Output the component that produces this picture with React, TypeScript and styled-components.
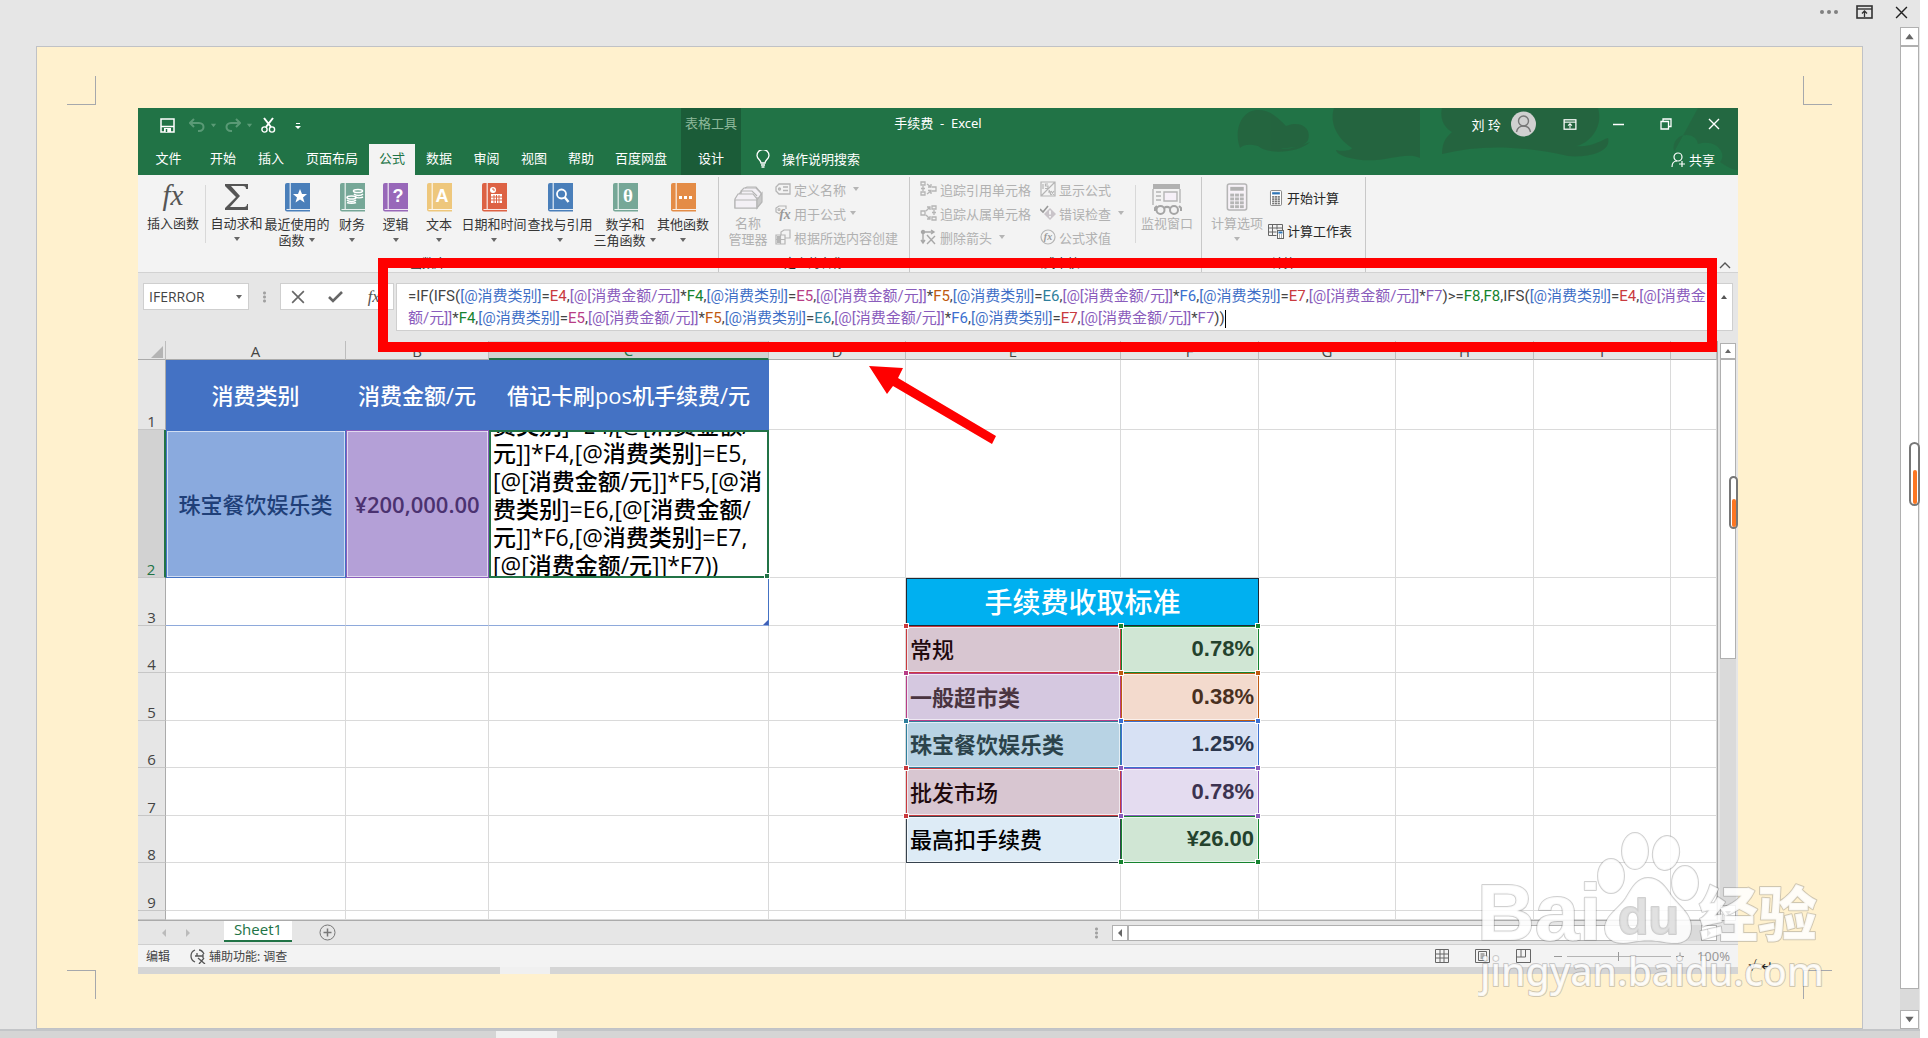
import React from 'react';
import styled, { createGlobalStyle, css } from 'styled-components';

const UI = `"Noto Sans", "Noto Sans CJK SC", sans-serif`;
const SHEET = `"Open Sans", "Noto Sans CJK SC", sans-serif`;

const GlobalStyle = createGlobalStyle`
  *, *::before, *::after { box-sizing: border-box; }
  body { margin: 0; background: #fff; font-family: ${UI}; font-size: 13px; color: #262626; }
  button, input { font: inherit; color: inherit; margin: 0; padding: 0; border: 0; background: none; }
  svg { display: block; flex: none; }
`;

/* ---------- outer document frame ---------- */

const Desk = styled.div`
  display: flex;
  flex-direction: column;
  min-height: 100vh;
  margin-right: 8px;
  background: #e6e6e6;
`;
const DeskBody = styled.div`
  position: relative;
  flex: 1;
  display: grid;
  grid-template-columns: minmax(0, 1fr) 20px;
  grid-template-rows: 27px 1fr;
`;
const DeskControls = styled.div`
  grid-column: 1 / 3;
  display: flex;
  justify-content: flex-end;
  align-items: center;
  gap: 18px;
  padding: 0 12px 3px 0;
`;
const IconButton = styled.button<{ $ml?: number; $mr?: number; $mt?: number }>`
  display: flex;
  align-items: center;
  justify-content: center;
  margin: ${p => p.$mt || 0}px ${p => p.$mr || 0}px 0 ${p => p.$ml || 0}px;
`;
const Paper = styled.main`
  position: relative;
  margin: 19px 37px 0 36px;
  padding: 61px 0 54px 101px;
  border: 1px solid #c0c2c6;
  background: #fff1ce;
  display: flex;
  align-items: flex-end;
`;
const CropMark = styled.i<{ $v: 'top' | 'bottom'; $h: 'left' | 'right' }>`
  position: absolute;
  width: 29px;
  height: 29px;
  ${p => p.$v}: 29px;
  ${p => p.$h}: 30px;
  border: 0 solid #a6a8ac;
  border-${p => (p.$v === 'top' ? 'bottom' : 'top')}-width: 1px;
  border-${p => (p.$h === 'left' ? 'right' : 'left')}-width: 1px;
`;
const Mark = styled.span`
  padding: 0 0 0 10px;
  width: 124px;
  flex: none;
  font: italic 14px/16px "DejaVu Sans", sans-serif;
  color: #222;
`;
const DeskFooter = styled.div`
  height: 10px;
  border-top: 2px solid #c3c5c8;
  background: #d5d5d5;
  padding-left: 496px;
`;
const FooterThumb = styled.i<{ $w: number }>`
  display: block;
  width: ${p => p.$w}px;
  height: 100%;
  background: #f0f0f0;
`;

/* ---------- scroll bars ---------- */

const VBar = styled.div`
  display: flex;
  flex-direction: column;
  background: #dadada;
  width: 19px;
`;
const SheetVBar = styled(VBar)`
  width: 16px;
  margin-top: 2px;
`;
const BarButton = styled.button<{ $s: number }>`
  width: ${p => p.$s}px;
  height: ${p => p.$s}px;
  flex: none;
  border: 1px solid #b0b0b0;
  background: #fff;
  display: flex;
  align-items: center;
  justify-content: center;
`;
const VThumb = styled.div<{ $w: number; $grow: number }>`
  width: ${p => p.$w}px;
  flex: ${p => p.$grow} 1 0;
  border: 1px solid #b0b0b0;
  background: #fff;
`;
const Space = styled.div<{ $grow: number }>`
  flex: ${p => p.$grow} 1 0;
`;
const Gauge = styled.i<{ $top: number; $w: number; $h: number; $fill: number }>`
  position: absolute;
  right: 0;
  top: ${p => p.$top}px;
  width: ${p => p.$w}px;
  height: ${p => p.$h}px;
  border: 2px solid #777;
  border-radius: 6px;
  background: #fff;
  display: flex;
  align-items: flex-end;
  justify-content: center;
  &::after {
    content: '';
    width: 4px;
    height: ${p => p.$fill}px;
    border-radius: 2px;
    background: #fc7622;
  }
`;

/* ---------- spreadsheet window ---------- */

const Window = styled.section`
  position: relative;
  flex: 1;
  min-width: 0;
  display: flex;
  flex-direction: column;
  background: #e6e6e6;
`;
const Header = styled.header`
  position: relative;
  background: #217346;
  color: #fff;
`;
const HeaderArt = styled.svg`
  position: absolute;
  right: 0;
  top: 0;
`;
const TitleRow = styled.div`
  position: relative;
  display: grid;
  grid-template-columns: 543px 60px 1fr 603px;
  height: 36px;
`;
const QuickAccess = styled.div`
  display: flex;
  align-items: center;
  padding: 0 0 2px 22px;
`;
const ContextTitle = styled.span`
  background: #1b5c38;
  color: #8db99b;
  text-align: center;
  line-height: 30px;
`;
const Title = styled.div`
  text-align: center;
  line-height: 30px;
  white-space: pre;
`;
const WindowControls = styled.div`
  display: flex;
  justify-content: flex-end;
  height: 32px;
  align-items: center;
`;
const User = styled.span`
  margin-right: 10px;
`;
const WinButton = styled(IconButton)`
  width: 48px;
  height: 32px;
`;
const Avatar = styled.span`
  margin-right: 10px;
`;
const TabRow = styled.nav`
  position: relative;
  display: flex;
  height: 31px;
`;
const Tab = styled.button<{ $w: number; $on?: boolean; $ctx?: boolean }>`
  width: ${p => p.$w}px;
  height: 31px;
  white-space: nowrap;
  line-height: 28px;
  padding-bottom: 3px;
  ${p => p.$on && css`background: #f3f3f3; color: #217346;`}
  ${p => p.$ctx && css`background: #1b5c38; margin-left: 3px;`}
`;
const Tell = styled.button`
  display: flex;
  align-items: center;
  gap: 12px;
  margin-left: 15px;
  padding-bottom: 2px;
`;
const Share = styled.button`
  display: flex;
  align-items: center;
  gap: 3px;
  margin-left: auto;
  margin-right: 23px;
`;

const Ribbon = styled.div`
  display: flex;
  height: 98px;
  padding-top: 2px;
  background: #f3f3f3;
  border-bottom: 1px solid #d2d2d2;
`;
const Group = styled.div<{ $w: number }>`
  width: ${p => p.$w}px;
  flex: none;
  display: flex;
  flex-direction: column;
  border-right: 1px solid #c8c8c8;
`;
const Commands = styled.div<{ $pad: number }>`
  display: flex;
  height: 80px;
  padding-left: ${p => p.$pad}px;
`;
const GroupName = styled.div`
  text-align: center;
  line-height: 14px;
  font-size: 12px;
`;
const Rule = styled.i<{ $wide?: boolean }>`
  width: 1px;
  height: 58px;
  margin: 8px ${p => (p.$wide ? 4 : 0)}px 0 4px;
  background: #d8d8d8;
`;
const Big = styled.button<{ $w: number; $off?: boolean; $tight?: boolean }>`
  width: ${p => p.$w}px;
  flex: none;
  display: flex;
  flex-direction: column;
  align-items: center;
  justify-content: flex-start;
  padding-top: 6px;
  line-height: 16px;
  white-space: nowrap;
  color: ${p => (p.$off ? '#b1b1b1' : '#363636')};
  & > svg:first-child { margin-bottom: ${p => (p.$tight ? 0 : 4)}px; }
`;
const Line = styled.span`
  display: flex;
  align-items: center;
  gap: 3px;
  height: 16px;
`;
const Stack = styled.div<{ $w: number; $row: number; $top: number }>`
  width: ${p => p.$w}px;
  flex: none;
  display: grid;
  grid-auto-rows: ${p => p.$row}px;
  padding-top: ${p => p.$top}px;
`;
const Small = styled.button<{ $off?: boolean }>`
  display: flex;
  align-items: center;
  gap: 3px;
  white-space: nowrap;
  color: ${p => (p.$off ? '#b1b1b1' : '#262626')};
`;
const Collapse = styled.button`
  margin: auto 7px 0 auto;
  height: 14px;
`;

const FormulaRow = styled.div`
  display: flex;
  align-items: flex-start;
  height: 68px;
  padding: 10px 5px 0;
`;
const Field = styled.div<{ $w: number; $pad?: number }>`
  width: ${p => p.$w}px;
  height: 27px;
  flex: none;
  display: flex;
  align-items: center;
  justify-content: space-between;
  padding: 0 ${p => p.$pad || 0}px;
  background: #fff;
  border: 1px solid #cfcfcf;
  color: #444;
`;
const NameInput = styled.input`
  width: 76px;
  padding-left: 5px;
  font-size: 14px;
  font-family: ${SHEET};
`;
const Dots = styled.i`
  width: 3px;
  height: 12px;
  margin: 8px 14px;
  flex: none;
  background: radial-gradient(circle, #a0a0a0 1px, transparent 2px) 0 0 / 3px 4px;
`;
const FormulaBox = styled.div`
  flex: 1;
  min-width: 0;
  height: 48px;
  margin-left: 2px;
  padding: 1px 4px 0 11px;
  background: #fff;
  border: 1px solid #cfcfcf;
  display: flex;
  justify-content: space-between;
  align-items: flex-start;
`;
const Formula = styled.div`
  min-width: 0;
  font: 15px/22px Roboto, "Noto Sans CJK SC", sans-serif;
  color: #444;
  white-space: nowrap;
`;
const FormulaLine = styled.div``;
const Tok = styled.span<{ $c: string }>`
  color: ${p => p.$c};
`;
const Caret = styled.i`
  display: inline-block;
  width: 1px;
  height: 18px;
  vertical-align: middle;
  background: #000;
`;

const SheetArea = styled.div`
  display: grid;
  grid-template-columns: minmax(0, 1fr) 18px;
  column-gap: 3px;
`;
const Grid = styled.table`
  width: 100%;
  table-layout: fixed;
  border-collapse: separate;
  border-spacing: 0;
  border-right: 1px solid #ababab;
  border-bottom: 1px solid #ababab;
  background: #fff;
  font: 500 22px/28px ${SHEET};
`;
const Col = styled.col<{ $w: number }>`
  width: ${p => p.$w}px;
`;
const ColHead = styled.th<{ $on?: boolean }>`
  height: 19px;
  padding: 1px 0 0;
  font: 400 15px/16px ${SHEET};
  color: ${p => (p.$on ? '#217346' : '#444')};
  background: ${p => (p.$on ? '#d2d2d2' : '#e6e6e6')};
  border-right: 1px solid #bdbdbd;
  border-bottom: ${p => (p.$on ? '2px solid #217346' : '1px solid #ababab')};
`;
const Corner = styled.th`
  padding: 0;
  background: #e6e6e6;
  border-right: 1px solid #bdbdbd;
  border-bottom: 1px solid #ababab;
  svg { margin: 3px 0 0 13px; }
`;
const RowHead = styled.th<{ $on?: boolean; $h: number }>`
  height: ${p => p.$h}px;
  padding: 0;
  vertical-align: bottom;
  font: 400 15px/16px ${SHEET};
  color: ${p => (p.$on ? '#217346' : '#444')};
  background: ${p => (p.$on ? '#d2d2d2' : '#e6e6e6')};
  border-right: ${p => (p.$on ? '2px solid #217346' : '1px solid #ababab')};
  border-bottom: 1px solid #c6c6c6;
`;
const Cell = styled.td<{ $bg?: string; $line?: string; $fg?: string; $align?: string; $weight?: number }>`
  position: relative;
  padding: 0 4px;
  white-space: nowrap;
  text-align: ${p => p.$align || 'left'};
  font-weight: ${p => p.$weight || 500};
  color: ${p => p.$fg || '#000'};
  background: ${p => p.$bg || '#fff'};
  border-right: 1px solid ${p => p.$line || '#dadada'};
  border-bottom: 1px solid ${p => p.$line || '#dadada'};
  ${p => p.$line && css`box-shadow: inset 1px 1px ${p.$line}, inset 2px 2px #ffffff99, inset -1px -1px #ffffff99;`}
`;
const HeadCell = styled(Cell)`
  border-color: #4472c4;
`;
const BandCell = styled(Cell)`
  border: 1px solid #1f2a36;
  font-size: 28px;
`;
const RateCell = styled(Cell)`
  font-family: "Liberation Sans", "Noto Sans CJK SC", sans-serif;
`;
const TableEnd = styled(Cell)<{ $last?: boolean }>`
  border-bottom: 1px solid #8ea9db;
  ${p => p.$last && css`border-right-color: #4472c4;`}
`;
const EndMark = styled.svg`
  position: absolute;
  right: 0;
  bottom: 0;
`;
const Edit = styled.div`
  height: 144px;
  overflow: hidden;
  display: flex;
  align-items: flex-end;
`;
const EditText = styled.div`
  margin-bottom: -3px;
  font-size: 23px;
  line-height: 28px;
  white-space: pre;
`;
const EditCell = styled(Cell)`
  padding: 0 2px;
  border: 2px solid #217346;
`;
const Handle = styled.i<{ $c: string; $at: 'tl' | 'tr' | 'bl' | 'br' }>`
  position: absolute;
  z-index: 1;
  width: 6px;
  height: 6px;
  background: ${p => p.$c};
  border: 1px solid #fff;
  ${p => (p.$at[0] === 't' ? 'top' : 'bottom')}: -3px;
  ${p => (p.$at[1] === 'l' ? 'left' : 'right')}: -3px;
`;

const SheetBar = styled.div`
  display: flex;
  height: 24px;
  align-items: center;
  border-bottom: 1px solid #cfcfcf;
`;
const SheetNav = styled.div`
  width: 86px;
  display: flex;
  gap: 16px;
  padding-left: 22px;
`;
const SheetTab = styled.button`
  width: 68px;
  height: 21px;
  align-self: flex-start;
  padding-bottom: 4px;
  background: #fff;
  color: #217346;
  font: 15px/16px ${SHEET};
  border-bottom: 2px solid #217346;
`;
const HBar = styled.div`
  display: flex;
  width: 605px;
  height: 16px;
  margin: 0 21px 0 0;
  background: #dadada;
`;
const HThumb = styled.div`
  width: 510px;
  background: #fff;
  border: 1px solid #b0b0b0;
`;
const Status = styled.footer`
  display: flex;
  align-items: center;
  height: 22px;
  padding: 0 8px;
  background: #f3f3f3;
  font-size: 12px;
  color: #444;
`;
const Access = styled.span`
  display: flex;
  align-items: center;
  gap: 2px;
  margin-left: 20px;
`;
const Views = styled.div`
  display: flex;
  gap: 26px;
  margin-left: auto;
`;
const Zoom = styled.label`
  display: flex;
  align-items: center;
  gap: 5px;
  margin-left: 23px;
  color: #999;
`;
const Range = styled.input`
  appearance: none;
  width: 104px;
  height: 9px;
  background: linear-gradient(#b5b5b5, #b5b5b5) 0 4px / 100% 1px no-repeat;
  &::-webkit-slider-thumb { appearance: none; width: 1px; height: 9px; background: #999; }
`;
const Percent = styled.span`
  margin-left: 8px;
  font-size: 13px;
`;
const BottomStrip = styled.div`
  height: 7px;
  background: #d5d5d5;
  padding-left: 362px;
`;

/* ---------- annotations lying over the window ---------- */

const RedFrame = styled.div`
  position: absolute;
  z-index: 2;
  left: 240px;
  right: 21px;
  top: 150px;
  height: 94px;
  border: 10px solid #f00;
  pointer-events: none;
`;
const Arrow = styled.svg`
  position: absolute;
  z-index: 2;
  left: 731px;
  top: 258px;
`;
const Watermark = styled.svg`
  position: absolute;
  z-index: 3;
  right: 34px;
  bottom: 27px;
`;

/* ---------- icons ---------- */

const Tri = ({ d = 'down', c = '#666', s = 8 }: { d?: 'down' | 'up' | 'left' | 'right'; c?: string; s?: number }) => {
  const path = { down: 'M1 2h6L4 6z', up: 'M1 6h6L4 2z', left: 'M6 0v8L2 4z', right: 'M2 0v8l4-4z' }[d];
  return <svg width={s} height={s} viewBox="0 0 8 8"><path d={path} fill={c} /></svg>;
};
const Cross = ({ c, s = 12, w = 2 }: { c: string; s?: number; w?: number }) => (
  <svg width={s} height={s} viewBox="0 0 12 12"><path d="M1 1l10 10M11 1L1 11" stroke={c} strokeWidth={w} fill="none" /></svg>
);
const Popup = ({ c, w = 17 }: { c: string; w?: number }) => (
  <svg width={w} height={w - 3} viewBox="0 0 17 14" fill="none" stroke={c}>
    <rect x="1" y="1" width="15" height="12" strokeWidth="1.6" /><path d="M1 4h15" strokeWidth="1.4" />
    <path d="M8.500 12V6M6 8.500L8.500 6 11 8.500" strokeWidth="1.300" />
  </svg>
);
const Book = ({ c, children }: { c: string; children: React.ReactNode }) => (
  <svg width="25" height="29" viewBox="0 0 25 29">
    <path d="M2 0h23v28.500H2a2 2 0 0 1-2-2V2a2 2 0 0 1 2-2z" fill={c} />
    <path d="M5.200 0v26M1.500 26.500H25" stroke="#fff" strokeWidth="1.200" opacity=".85" fill="none" />
    {children}
  </svg>
);
const Glyph = ({ x, children, f = 'Liberation Sans', s = 18 }: any) => (
  <text x={x} y="19" textAnchor="middle" fontFamily={f} fontWeight="700" fontSize={s} fill="#fff">{children}</text>
);
const Fx = ({ s = 28, c = '#555', dim = 31 }: { s?: number; c?: string; dim?: number }) => (
  <svg width={dim} height={s} viewBox="0 0 31 28">
    <text x="15" y="22" textAnchor="middle" fontFamily="Liberation Serif" fontStyle="italic" fontSize="29" fill={c}>fx</text>
  </svg>
);
const G = '#b5b5b5';
const TagIcon = () => (
  <svg width="16" height="14" viewBox="0 0 16 14" fill="none" stroke={G} strokeWidth="1.300">
    <path d="M4 2h11v10H4L1 9V5z" /><circle cx="4.500" cy="7" r="1" /><path d="M8 5h5M8 8.500h5" />
  </svg>
);
const TagFx = () => (
  <svg width="16" height="16" viewBox="0 0 16 16" fill="none" stroke={G} strokeWidth="1.200">
    <path d="M5 9L1 7V3l3-2h7v3" /><circle cx="4" cy="4.500" r="1" />
    <text x="10" y="14" textAnchor="middle" fontFamily="Liberation Serif" fontStyle="italic" fontWeight="700" fontSize="14" fill="#999" stroke="none">fx</text>
  </svg>
);
const FromSel = () => (
  <svg width="16" height="16" viewBox="0 0 16 16" fill="none" stroke={G} strokeWidth="1.200">
    <path d="M1 6h9v9H1zM1 10.500h9M5.500 6v9" /><path d="M6 6V3l3-2h6v8h-5" /><path d="M2 7h3v3H2zM2 11h3v3H2z" fill={G} stroke="none" />
  </svg>
);
const Precedents = () => (
  <svg width="17" height="16" viewBox="0 0 17 16" fill="none" stroke={G} strokeWidth="1.300">
    <path d="M1 1h4v3H1zM1 11h4v3H1zM12 6h4v4h-4M3 5v5M1 7.500h4M7 3l4 3M11 3v3H8M7 13l4-3M8 9.500h3V13" />
  </svg>
);
const Dependents = () => (
  <svg width="17" height="16" viewBox="0 0 17 16" fill="none" stroke={G} strokeWidth="1.300">
    <path d="M1 6h4v4H1zM12 1h4v3h-4zM12 12h4v3h-4zM14 5v5M12 7.500h4M6 6l4-4M7 2h3v3M6 10l4 4M7 14h3v-3" />
  </svg>
);
const RemoveArrows = () => (
  <svg width="17" height="16" viewBox="0 0 17 16" fill="none" stroke="#a8a8a8" strokeWidth="1.400">
    <path d="M3 3h11M11 1l3 2-3 2M3 3v11M1 11l2 3 2-3M7 6l8 9M15 7l-8 8" /><circle cx="3" cy="3" r="1.500" fill="#a8a8a8" />
  </svg>
);
const ShowFormulas = () => (
  <svg width="16" height="16" viewBox="0 0 16 16" fill="none" stroke={G} strokeWidth="1.200">
    <path d="M1 1h14v14H1zM1 15L15 1" /><path d="M3 3v5M8 3H5.500v2H8v2.500H5M9 9l2 5M8 11h3M11 14l3-4M11 10l3 4" />
  </svg>
);
const ErrorCheck = () => (
  <svg width="16" height="16" viewBox="0 0 16 16" fill="none">
    <path d="M0 4l3 3 5-6" stroke="#999" strokeWidth="1.600" /><path d="M10 3l6 6-6 6-6-6z" fill="#c9c4c9" />
    <path d="M10 5.500v4M10 11v1.500" stroke="#fff" strokeWidth="1.500" />
  </svg>
);
const Evaluate = () => (
  <svg width="16" height="16" viewBox="0 0 16 16">
    <circle cx="8" cy="8" r="7" fill="none" stroke={G} strokeWidth="1.200" />
    <text x="8" y="11" textAnchor="middle" fontFamily="Liberation Serif" fontStyle="italic" fontWeight="700" fontSize="10" fill="#999">fx</text>
  </svg>
);
const Drawer = () => (
  <svg width="29" height="28" viewBox="0 0 29 28" fill="#f3f0f5" stroke={G} strokeWidth="1.200">
    <path d="M7 14V8l3-3h12l5 5v9l-4 5V14" /><path d="M5 11l3-3h10l5 5M11 5l2-1h9l5 6" fill="none" />
    <path d="M4 11h15l4 5v9H1v-9z" /><path d="M1 17h22v8H1z" /><path d="M23 17l5-7v9l-5 6z" fill="#c8c8c8" />
  </svg>
);
const Watch = () => (
  <svg width="30" height="32" viewBox="0 0 30 32" fill="none" stroke={G} strokeWidth="1.400">
    <path d="M1 1h27v5H1z" fill="#b1b1b1" stroke="none" /><path d="M1 6v16M28 6v14" /><path d="M12 9h13v9H12z" fill="#f6f0f8" /><path d="M4 9h5M4 13h5M4 17h5" />
    <path d="M5 23l-2 2v3M27 23l2 2v3M12 25c2-1.500 4-1.500 6 0" stroke="#a5a5a5" strokeWidth="2" />
    <circle cx="8.500" cy="27" r="4" fill="#f3f3f3" stroke="#a5a5a5" strokeWidth="2" /><circle cx="22" cy="27" r="4" fill="#f3f3f3" stroke="#a5a5a5" strokeWidth="2" />
  </svg>
);
const Calc = ({ w, h, c, screen, bg }: { w: number; h: number; c: string; screen: string; bg: string }) => (
  <svg width={w} height={h} viewBox="0 0 22 29">
    <rect x="1" y="1" width="20" height="27" rx="2" fill={bg} stroke={c} strokeWidth="1.600" />
    <path d="M4 4h14v4H4z" fill={screen} />
    {[11, 15, 19, 23].map(y => [4, 9, 14].map(x => <rect key={`${x}-${y}`} x={x} y={y} width="4" height="3" fill={c} />))}
  </svg>
);
const CalcSheet = () => (
  <svg width="16" height="16" viewBox="0 0 16 16" fill="none" stroke="#666">
    <path d="M.5 1.500h14v6M.5 1.500v11h8M.5 5h14M.5 9h8M4.500 1.500v11M9 1.500v5" />
    <rect x="9.500" y="7.500" width="6" height="8" fill="#fff" /><path d="M10.500 9.500h4" stroke="#2e75b6" strokeWidth="2" /><path d="M11 12h1M13 12h1M11 14h1M13 14h1" />
  </svg>
);
const Person = ({ plus }: { plus?: boolean }) => (
  <svg width={plus ? 15 : 25} height={plus ? 16 : 26} viewBox={plus ? '0 0 15 16' : '0 0 25 26'} fill="none">
    {plus ? (
      <g stroke="#fff" strokeWidth="1.200"><circle cx="7" cy="5" r="4" /><path d="M1 15c0-4 2-6 5-6M11 9v6M8 12h6" /></g>
    ) : (
      <g><circle cx="12.500" cy="13" r="12.500" fill="#d0d0d0" /><g stroke="#777" strokeWidth="1.400"><circle cx="12.500" cy="10" r="5" /><path d="M5.500 21c1-5 4-6 7-6s6 1 7 6" /></g></g>
    )}
  </svg>
);

/* ---------- data ---------- */

const BLUE = '#4472c4', PURPLE = '#8a5cbc', RED = '#c93a3e', MAG = '#b83d86', TEAL = '#2f7f9c', GREEN = '#15832f', ORANGE = '#bf5a10', BLUE2 = '#3b6fd0';
const refColors: Record<string, string> = { E4: RED, E5: MAG, E6: TEAL, E7: RED, F4: GREEN, F5: ORANGE, F6: BLUE2, F7: PURPLE, F8: GREEN };

const colorize = (text: string) =>
  text.split(/(\[@消费类别\]|\[@\[消费金额\/元\]\]|\[@\[消费金$|^额\/元\]\]|[EF][4-8])/).filter(Boolean).map((part, i) => {
    const color = refColors[part] || (part.includes('消费类别') ? '#3f6fc6' : /消费金|^额/.test(part) ? PURPLE : '');
    return color ? <Tok key={i} $c={color}>{part}</Tok> : part;
  });

const formula = [
  '=IF(IFS([@消费类别]=E4,[@[消费金额/元]]*F4,[@消费类别]=E5,[@[消费金额/元]]*F5,[@消费类别]=E6,[@[消费金额/元]]*F6,[@消费类别]=E7,[@[消费金额/元]]*F7)>=F8,F8,IFS([@消费类别]=E4,[@[消费金',
  '额/元]]*F4,[@消费类别]=E5,[@[消费金额/元]]*F5,[@消费类别]=E6,[@[消费金额/元]]*F6,[@消费类别]=E7,[@[消费金额/元]]*F7))',
];
const editText = '费类别]=E4,[@[消费金额/\n元]]*F4,[@消费类别]=E5,\n[@[消费金额/元]]*F5,[@消\n费类别]=E6,[@[消费金额/\n元]]*F6,[@消费类别]=E7,\n[@[消费金额/元]]*F7))';

const tabs: [string, number][] = [['文件', 61], ['开始', 48], ['插入', 48], ['页面布局', 74], ['公式', 46], ['数据', 48], ['审阅', 47], ['视图', 48], ['帮助', 46], ['百度网盘', 74]];
const columns: [string, number][] = [['A', 180], ['B', 143], ['C', 280], ['D', 137], ['E', 215], ['F', 138], ['G', 137], ['H', 138], ['I', 137], ['', 46]];

type Fee = { row: number; h: number; name: string; rate: string; weight?: number; nameBg: string; nameLine: string; nameFg: string; bg: string; line: string; fg: string };
const fees: Fee[] = [
  { row: 4, h: 47, name: '常规', rate: '0.78%', nameBg: '#d8c6d1', nameLine: RED, nameFg: '#1f0a0e', bg: '#d0e6d4', line: GREEN, fg: '#24422d' },
  { row: 5, h: 48, name: '一般超市类', rate: '0.38%', weight: 700, nameBg: '#d5c8e0', nameLine: MAG, nameFg: '#4a3440', bg: '#f3dacd', line: ORANGE, fg: '#49301f' },
  { row: 6, h: 47, name: '珠宝餐饮娱乐类', rate: '1.25%', weight: 700, nameBg: '#b8d3e4', nameLine: TEAL, nameFg: '#2c434b', bg: '#d7e1f4', line: BLUE2, fg: '#2b364d' },
  { row: 7, h: 48, name: '批发市场', rate: '0.78%', nameBg: '#d8c6d1', nameLine: RED, nameFg: '#1f0a0e', bg: '#e4dcf0', line: PURPLE, fg: '#3c3350' },
  { row: 8, h: 47, name: '最高扣手续费', rate: '¥26.00', nameBg: '#ddebf6', nameLine: '#36424e', nameFg: '#000', bg: '#d0e6d4', line: GREEN, fg: '#24422d' },
];
const blanks = (n: number) => Array.from({ length: n }, (_, i) => <Cell key={`b${i}`} />);

/* ---------- page sections ---------- */

const TopChrome = () => (
  <Header>
    <HeaderArt width="520" height="67" viewBox="0 0 520 67">
      <g fill="#26603d" opacity=".75">
        <path d="M22 40c-6-16 0-36 16-38 14-1 22 8 30 16 14-6 26 2 22 14-4 8-20 8-28 8 10 2 20-2 30-6-10 10-40 14-52 4-8-2-14-2-18 2z" />
        <path d="M116 0h86v50c-16-8-40 8-70 0-10-2-14-6-14-8 8 2 16 0 16-2-18-12-22-28-18-40z" />
        <path d="M224 0h156c6 20-10 36-22 38 14 2 26-6 32-8 4 14-20 20-40 18-46-10-86-12-126-2 0-14 6-18 10-22-10-6-12-16-10-24z" />
        <path d="M456 44c-4-20 22-22 24-8 18-6 30 10 22 18 6 4 12 8 18 8V0h-40" opacity=".7" />
      </g>
    </HeaderArt>
    <TitleRow>
      <QuickAccess>
        <IconButton aria-label="保存">
          <svg width="15" height="15" viewBox="0 0 15 15" fill="none" stroke="#fff" strokeWidth="1.500"><path d="M1 1h13v13H1z" /><path d="M1 8.500h13" /><path d="M4 10h7v4H4z" fill="#fff" stroke="none" /><path d="M6.500 11v3" stroke="#217346" /></svg>
        </IconButton>
        <IconButton aria-label="撤消" $ml={14}>
          <svg width="16" height="14" viewBox="0 0 16 14" fill="none" stroke="#5a9a76" strokeWidth="2"><path d="M5 1L1 5l4 4M1 5h9c6 0 6 8 0 8H9" /></svg>
        </IconButton>
        <IconButton aria-label="撤消列表" $ml={5}><Tri c="#5a9a76" s={7} /></IconButton>
        <IconButton aria-label="恢复" $ml={8}>
          <svg width="16" height="14" viewBox="0 0 16 14" fill="none" stroke="#5a9a76" strokeWidth="2"><path d="M11 1l4 4-4 4M15 5H6c-6 0-6 8 0 8h1" /></svg>
        </IconButton>
        <IconButton aria-label="恢复列表" $ml={5}><Tri c="#5a9a76" s={7} /></IconButton>
        <IconButton aria-label="剪切" $ml={8}>
          <svg width="15" height="16" viewBox="0 0 15 16" fill="none" stroke="#fff" strokeWidth="1.400"><path d="M3 1l7 9M12 1L5 10" strokeWidth="2" /><circle cx="3.500" cy="12.500" r="2.600" /><circle cx="11" cy="12.500" r="2.600" /></svg>
        </IconButton>
        <IconButton aria-label="自定义" $ml={18}>
          <svg width="8" height="10" viewBox="0 0 8 10"><path d="M2 3h4v1H2zM1 6h6L4 9z" fill="#fff" /></svg>
        </IconButton>
      </QuickAccess>
      <ContextTitle>表格工具</ContextTitle>
      <Title>{'手续费  -  Excel'}</Title>
      <WindowControls>
        <User>刘 玲</User>
        <Avatar><Person /></Avatar>
        <WinButton aria-label="功能区显示选项"><Popup c="#fff" w={14} /></WinButton>
        <WinButton aria-label="最小化"><svg width="11" height="3" viewBox="0 0 11 3"><path d="M0 1.500h11" stroke="#fff" strokeWidth="1.500" /></svg></WinButton>
        <WinButton aria-label="还原"><svg width="12" height="12" viewBox="0 0 12 12" fill="none" stroke="#fff" strokeWidth="1.300"><path d="M1 3.500h7.500V11H1zM3 3.500V1h8v7.500H8.500" /></svg></WinButton>
        <WinButton aria-label="关闭"><Cross c="#fff" s={12} w={1.4} /></WinButton>
      </WindowControls>
    </TitleRow>
    <TabRow>
      {tabs.map(([t, w]) => <Tab key={t} $w={w} $on={t === '公式'}>{t}</Tab>)}
      <Tab $w={60} $ctx>设计</Tab>
      <Tell>
        <svg width="14" height="18" viewBox="0 0 14 18" fill="none" stroke="#fff" strokeWidth="1.300"><path d="M5 13c0-3-4-4-4-7.500a6 6 0 0 1 12 0C13 9 9 10 9 13zM5 15h4M5.500 17h3" /></svg>
        操作说明搜索
      </Tell>
      <Share><Person plus />共享</Share>
    </TabRow>
  </Header>
);

const RibbonBar = () => (
  <Ribbon>
    <Group $w={581}>
      <Commands $pad={7}>
        <Big $w={56}><Fx /><Line>插入函数</Line></Big>
        <Rule $wide />
        <Big $w={53}>
          <svg width="25" height="28" viewBox="0 0 25 28"><path d="M1 1h23v5h-2c0-2-1-3-3-3H7l9 10L6 24h14c2 0 3-1 3-3h1v6H1v-2l11-11L1 3z" fill="#555" /></svg>
          <Line>自动求和</Line><Line><Tri /></Line>
        </Big>
        <Big $w={68}><Book c="#4a7fba"><path d="M15 6l2 5h5l-4 3.500 1.500 5L15 16.500 10.500 19.500l1.500-5L8 11h5z" fill="#fff" /></Book><Line>最近使用的</Line><Line>函数<Tri /></Line></Big>
        <Big $w={42}><Book c="#76a797"><g fill="none" stroke="#fff" strokeWidth="1.600"><ellipse cx="18" cy="8" rx="4.500" ry="1.500" /><path d="M14 11c2 2 7 2 9 0M15 14c2 1 6 1 8 0M7 17c2 2 7 2 9 0M7 19.500c2 1 7 1 9 0" /><ellipse cx="11.500" cy="14.500" rx="4.500" ry="1.500" /></g></Book><Line>财务</Line><Line><Tri /></Line></Big>
        <Big $w={45}><Book c="#9868b9"><Glyph x="15">?</Glyph></Book><Line>逻辑</Line><Line><Tri /></Line></Big>
        <Big $w={42}><Book c="#eec77c"><Glyph x="15">A</Glyph></Book><Line>文本</Line><Line><Tri /></Line></Big>
        <Big $w={68}><Book c="#dd6244"><circle cx="11" cy="7" r="3" fill="#fff" /><path d="M11 5v2h2" stroke="#dd6244" fill="none" /><path d="M9 11h11v9H9z" fill="#fff" /><path d="M9 14h11M9 17h11M12 12v8M14.500 12v8M17 12v8" stroke="#dd6244" fill="none" /></Book><Line>日期和时间</Line><Line><Tri /></Line></Big>
        <Big $w={64}><Book c="#4a7fba"><circle cx="13.500" cy="11" r="4.500" fill="none" stroke="#fff" strokeWidth="1.800" /><path d="M16.500 14l4 5" stroke="#fff" strokeWidth="2.400" /></Book><Line>查找与引用</Line><Line><Tri /></Line></Big>
        <Big $w={66}><Book c="#76a797"><Glyph x="15" f="Liberation Serif" s={19}>θ</Glyph></Book><Line>数学和</Line><Line>三角函数<Tri /></Line></Big>
        <Big $w={50}><Book c="#e48c46"><path d="M8 13h3v3H8zM13 13h3v3h-3zM18 13h3v3h-3z" fill="#fff" /></Book><Line>其他函数</Line><Line><Tri /></Line></Big>
      </Commands>
      <GroupName>函数库</GroupName>
    </Group>
    <Group $w={191}>
      <Commands $pad={2}>
        <Big $w={54} $off><Drawer /><Line>名称</Line><Line>管理器</Line></Big>
        <Stack $w={130} $row={24} $top={0}>
          <Small $off><TagIcon />定义名称<span /><Tri c={G} /></Small>
          <Small $off><TagFx />用于公式<Tri c={G} /></Small>
          <Small $off><FromSel />根据所选内容创建</Small>
        </Stack>
      </Commands>
      <GroupName>定义的名称</GroupName>
    </Group>
    <Group $w={292}>
      <Commands $pad={10}>
        <Stack $w={120} $row={24} $top={0}>
          <Small $off><Precedents />追踪引用单元格</Small>
          <Small $off><Dependents />追踪从属单元格</Small>
          <Small $off><RemoveArrows />删除箭头<span /><Tri c={G} /></Small>
        </Stack>
        <Stack $w={91} $row={24} $top={0}>
          <Small $off><ShowFormulas />显示公式</Small>
          <Small $off><ErrorCheck />错误检查<span /><Tri c={G} /></Small>
          <Small $off><Evaluate />公式求值</Small>
        </Stack>
        <Rule />
        <Big $w={62} $off $tight><Watch /><Line>监视窗口</Line></Big>
      </Commands>
      <GroupName>公式审核</GroupName>
    </Group>
    <Group $w={164}>
      <Commands $pad={4}>
        <Big $w={62} $off><Calc w={22} h={28} c={G} screen="#b1b1b1" bg="#f7f2f8" /><Line>计算选项</Line><Line><Tri c={G} /></Line></Big>
        <Stack $w={90} $row={33} $top={4}>
          <Small><Calc w={16} h={16} c="#777" screen="#2e75b6" bg="#fff" />开始计算</Small>
          <Small><CalcSheet />计算工作表</Small>
        </Stack>
      </Commands>
      <GroupName>计算</GroupName>
    </Group>
    <Collapse aria-label="折叠功能区"><svg width="12" height="8" viewBox="0 0 12 8"><path d="M1 7l5-5 5 5" fill="none" stroke="#555" strokeWidth="1.400" /></svg></Collapse>
  </Ribbon>
);

const FormulaBar = () => (
  <FormulaRow>
    <Field $w={106}><NameInput aria-label="名称框" defaultValue="IFERROR" /><IconButton aria-label="名称列表" $mr={5}><Tri /></IconButton></Field>
    <Dots />
    <Field $w={114} $pad={10}>
      <IconButton aria-label="取消"><Cross c="#666" s={14} w={1.4} /></IconButton>
      <IconButton aria-label="输入"><svg width="15" height="12" viewBox="0 0 15 12"><path d="M1 6l4 4 9-9" fill="none" stroke="#666" strokeWidth="2.600" /></svg></IconButton>
      <IconButton aria-label="插入函数"><Fx s={18} dim={18} /></IconButton>
    </Field>
    <FormulaBox>
      <Formula role="textbox" aria-label="编辑栏" aria-multiline="true">
        <FormulaLine>{colorize(formula[0])}</FormulaLine>
        <FormulaLine>{colorize(formula[1])}<Caret /></FormulaLine>
      </Formula>
      <IconButton aria-label="折叠编辑栏" $mt={8}><Tri d="up" c="#555" /></IconButton>
    </FormulaBox>
  </FormulaRow>
);

const Sheet = () => (
  <SheetArea>
    <Grid>
      <colgroup>
        <Col $w={28} />
        {columns.map(([, w], i) => <Col key={i} $w={w} />)}
      </colgroup>
      <thead>
        <tr>
          <Corner><svg width="12" height="12" viewBox="0 0 12 12"><path d="M12 0v12H0z" fill="#b4b4b4" /></svg></Corner>
          {columns.map(([c], i) => <ColHead key={i} $on={c === 'C'}>{c}</ColHead>)}
        </tr>
      </thead>
      <tbody>
        <tr>
          <RowHead $h={70}>1</RowHead>
          {['消费类别', '消费金额/元', '借记卡刷pos机手续费/元'].map(t => <HeadCell key={t} $bg="#4472c4" $fg="#fff" $align="center">{t}</HeadCell>)}
          {blanks(7)}
        </tr>
        <tr>
          <RowHead $h={148} $on>2</RowHead>
          <Cell $bg="#8aaade" $line={BLUE} $fg="#1f3f78" $align="center">珠宝餐饮娱乐类</Cell>
          <Cell $bg="#b4a0d7" $line={PURPLE} $fg="#4b3270" $align="center" $weight={600}>¥200,000.00</Cell>
          <EditCell><Edit><EditText>{editText}</EditText></Edit><Handle $c="#217346" $at="br" /></EditCell>
          {blanks(7)}
        </tr>
        <tr>
          <RowHead $h={48}>3</RowHead>
          <TableEnd /><TableEnd />
          <TableEnd $last><EndMark width="5" height="5" viewBox="0 0 5 5"><path d="M5 0v5H0z" fill="#3f5fb8" /></EndMark></TableEnd>
          <Cell />
          <BandCell colSpan={2} $bg="#00b0f0" $fg="#fff" $align="center">手续费收取标准</BandCell>
          {blanks(4)}
        </tr>
        {fees.map(f => (
          <tr key={f.row}>
            <RowHead $h={f.h}>{f.row}</RowHead>
            {blanks(4)}
            <Cell $bg={f.nameBg} $line={f.nameLine} $fg={f.nameFg} $weight={f.weight}>{f.name}<Handle $c={f.row === 8 ? RED : f.nameLine} $at="tl" /></Cell>
            <RateCell $bg={f.bg} $line={f.line} $fg={f.fg} $align="right" $weight={700}>
              {f.rate}
              <Handle $c={f.row === 8 ? PURPLE : f.line} $at="tl" /><Handle $c={f.row === 8 ? PURPLE : f.line} $at="tr" />
              {f.row === 8 && <><Handle $c={GREEN} $at="bl" /><Handle $c={GREEN} $at="br" /></>}
            </RateCell>
            {blanks(4)}
          </tr>
        ))}
        <tr><RowHead $h={48}>9</RowHead>{blanks(10)}</tr>
        <tr><RowHead $h={9} />{blanks(10)}</tr>
      </tbody>
    </Grid>
    <SheetVBar>
      <BarButton $s={16} aria-label="向上滚动"><Tri d="up" /></BarButton>
      <VThumb $w={16} $grow={299} />
      <Space $grow={247} />
      <BarButton $s={16} aria-label="向下滚动"><Tri /></BarButton>
    </SheetVBar>
  </SheetArea>
);

const Bottom = () => (
  <>
    <SheetBar>
      <SheetNav><Tri d="left" c="#bbb" /><Tri d="right" c="#bbb" /></SheetNav>
      <SheetTab>Sheet1</SheetTab>
      <IconButton aria-label="新工作表" $ml={27}><svg width="17" height="17" viewBox="0 0 17 17" fill="none" stroke="#777"><circle cx="8.500" cy="8.500" r="7.500" /><path d="M8.500 4.500v8M4.500 8.500h8" strokeWidth="1.500" /></svg></IconButton>
      <Space $grow={1} />
      <Dots />
      <HBar>
        <BarButton $s={16} aria-label="向左滚动"><Tri d="left" /></BarButton>
        <HThumb />
        <Space $grow={1} />
        <BarButton $s={16} aria-label="向右滚动"><Tri d="right" /></BarButton>
      </HBar>
    </SheetBar>
    <Status>
      <span>编辑</span>
      <Access>
        <svg width="17" height="15" viewBox="0 0 17 15" fill="none" stroke="#555" strokeWidth="1.300"><path d="M5 1a6.500 6.500 0 0 0 0 12M5 7h8M7 4v3M13 5v4M8 9l7 6M14 9l-5 6M9 1c2 0 4 2 5 4" /></svg>
        辅助功能: 调查
      </Access>
      <Views>
        <IconButton aria-label="普通"><svg width="14" height="14" viewBox="0 0 14 14" fill="none" stroke="#666"><path d="M.5.5h13v13H.5zM.5 5h13M.5 9h13M5 .5v13M9 .5v13" /></svg></IconButton>
        <IconButton aria-label="页面布局"><svg width="15" height="14" viewBox="0 0 15 14" fill="none" stroke="#666"><path d="M.5.5h14v13H.5zM3.500 2.500h8v9h-8zM5.500 5h4M5.500 7h4M5.500 9h4" /></svg></IconButton>
        <IconButton aria-label="分页预览"><svg width="15" height="14" viewBox="0 0 15 14" fill="none" stroke="#666"><path d="M.5.5h14v13H.5zM.5 8h9V.5M5 .5V8" /></svg></IconButton>
      </Views>
      <Zoom><svg width="8" height="9" viewBox="0 0 8 9"><path d="M0 4.500h8" stroke="#999" /></svg><Range type="range" defaultValue={50} aria-label="缩放" /><svg width="8" height="9" viewBox="0 0 8 9"><path d="M0 4.500h8M4 .5v8" stroke="#999" /></svg><Percent>100%</Percent></Zoom>
    </Status>
    <BottomStrip><FooterThumb $w={50} /></BottomStrip>
  </>
);

const BaiduMark = () => (
  <Watermark width="350" height="170" viewBox="0 0 350 170" fill="#fff" fillOpacity=".85" stroke="#777" strokeOpacity=".35" strokeWidth="2" paintOrder="stroke" strokeLinejoin="round">
    <ellipse cx="133" cy="45" rx="13" ry="17" />
    <ellipse cx="157" cy="20" rx="13" ry="18" />
    <ellipse cx="188" cy="22" rx="13" ry="17" transform="rotate(10 188 22)" />
    <ellipse cx="207" cy="52" rx="13" ry="17" />
    <path d="M170 47c12 0 18 10 24 19 9 11 20 18 19 32-1 16-16 15-27 13-11-2-21-2-32 0-13 3-26 0-27-13 0-14 14-20 21-31 6-10 11-20 22-20z" />
    <text x="-1" y="109" fontFamily="Liberation Sans" fontWeight="700" fontSize="80">Bai</text>
    <text x="140" y="103" fontFamily="Liberation Sans" fontWeight="700" fontSize="50" fill="#dcdcdc">du</text>
    <text x="221" y="105" fontFamily="Noto Sans CJK SC" fontWeight="900" fontSize="59">经验</text>
    <text x="2" y="155" fontFamily="Noto Sans" fontWeight="500" fontSize="39">jingyan.baidu.com</text>
  </Watermark>
);

export default function App() {
  return (
    <>
      <GlobalStyle />
      <Desk>
        <DeskBody>
          <DeskControls>
            <IconButton aria-label="更多"><svg width="18" height="4" viewBox="0 0 18 4" fill="#808080"><circle cx="2" cy="2" r="2" /><circle cx="9" cy="2" r="2" /><circle cx="16" cy="2" r="2" /></svg></IconButton>
            <IconButton aria-label="弹出"><Popup c="#333" /></IconButton>
            <IconButton aria-label="关闭文档" $ml={4}><Cross c="#222" s={13} w={1.3} /></IconButton>
          </DeskControls>
          <Paper>
            <CropMark $v="top" $h="left" /><CropMark $v="top" $h="right" />
            <CropMark $v="bottom" $h="left" /><CropMark $v="bottom" $h="right" />
            <Window>
              <TopChrome />
              <RibbonBar />
              <FormulaBar />
              <Sheet />
              <Bottom />
              <RedFrame />
              <Arrow width="128" height="79" viewBox="0 0 128 79"><path d="M0 0l34 2-5 10 98 58-4 8-99-58-6 8z" fill="#f00" /></Arrow>
              <Gauge $top={368} $w={9} $h={53} $fill={28} />
            </Window>
            <Mark>√ ↵</Mark>
            <BaiduMark />
          </Paper>
          <VBar>
            <BarButton $s={19} aria-label="上一页"><Tri d="up" s={11} /></BarButton>
            <VThumb $w={19} $grow={942} />
            <Space $grow={21} />
            <BarButton $s={19} aria-label="下一页"><Tri s={11} /></BarButton>
          </VBar>
          <Gauge $top={442} $w={11} $h={64} $fill={34} />
        </DeskBody>
        <DeskFooter><FooterThumb $w={61} /></DeskFooter>
      </Desk>
    </>
  );
}
